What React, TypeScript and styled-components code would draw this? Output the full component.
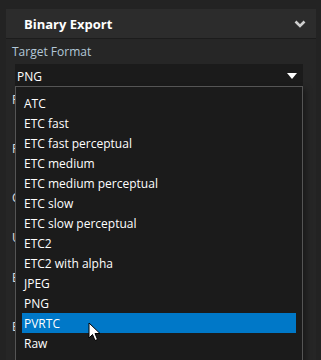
import styled, { createGlobalStyle } from "styled-components";

const GlobalStyle = createGlobalStyle`
  html, body {
    margin: 0;
    padding: 0;
    background: #232323;
    font-family: "Segoe UI", "Open Sans", "Noto Sans", sans-serif;
    -webkit-font-smoothing: antialiased;
  }
`

const Screen = styled.div`
  position: relative;
  width: 321px;
  height: 360px;
  overflow: hidden;
  background: #232323;
`

const Section = styled.div`
  margin: 9px 5px 0 6px;
  height: 351px;
  background: #262626;
`

const Header = styled.div`
  height: 30px;
  display: flex;
  align-items: center;
  justify-content: space-between;
  padding: 0 10px 0 18px;
  background: #2c2c2c;
  border-bottom: 1px solid #1c1c1c;
  box-sizing: border-box;
  color: #ffffff;
  font-size: 13px;
  font-weight: 700;
`

const Body = styled.div`
  position: relative;
  padding: 3px 0 0 6px;
`

const Label = styled.div<{ $gap?: number }>`
  height: 20px;
  line-height: 20px;
  font-size: 12px;
  color: #b3c8d8;
  margin-top: ${p => p.$gap ?? 0}px;
`

// labels covered by the open popup: only their first stroke shows
const CoveredLabel = styled(Label)`
  width: 9px;
  overflow: hidden;
  white-space: nowrap;
  color: #e6e6e6;
`

const Select = styled.div`
  margin: 2px 0 0 3px;
  width: 288px;
  height: 24px;
  display: flex;
  align-items: center;
  justify-content: space-between;
  padding: 0 6px 0 2px;
  box-sizing: border-box;
  background: #1b1b1b;
  color: #ffffff;
  font-size: 12px;
`

const Popup = styled.div`
  position: absolute;
  left: 15px;
  top: 86px;
  width: 288px;
  height: 280px;
  box-sizing: border-box;
  background: #1b1b1b;
  border: 1px solid #555555;
  padding: 6px 6px 0 6px;
  box-shadow: 3px 3px 6px rgba(0, 0, 0, 0.35);
`

const Option = styled.div<{ $active?: boolean }>`
  height: 20px;
  line-height: 22px;
  overflow: hidden;
  padding-left: 2px;
  font-size: 12px;
  color: #ffffff;
  background: ${p => (p.$active ? "#0078c8" : "transparent")};
`

const Cursor = styled.svg`
  position: absolute;
  left: 88px;
  top: 322px;
`

const options = [
  "ATC",
  "ETC fast",
  "ETC fast perceptual",
  "ETC medium",
  "ETC medium perceptual",
  "ETC slow",
  "ETC slow perceptual",
  "ETC2",
  "ETC2 with alpha",
  "JPEG",
  "PNG",
  "PVRTC",
  "Raw",
]

const hiddenLabels = [
  { text: "P", gap: 2 },
  { text: "P", gap: 29 },
  { text: "C", gap: 29 },
  { text: "U", gap: 20 },
  { text: "E", gap: 20 },
  { text: "E", gap: 29 },
]

export default function App() {
  return (
    <Screen>
      <GlobalStyle />
      <Section>
        <Header>
          <span>Binary Export</span>
          <svg width="12" height="8" viewBox="0 0 12 8">
            <path d="M1.5 1.5 L6 6 L10.5 1.5" fill="none" stroke="#cfcfcf" strokeWidth="2.6" />
          </svg>
        </Header>
        <Body>
          <Label>Target Format</Label>
          <Select>
            <span>PNG</span>
            <svg width="10" height="6" viewBox="0 0 10 6">
              <path d="M0 0 H10 L5 6 Z" fill="#ffffff" />
            </svg>
          </Select>
          {hiddenLabels.map((l, i) => (
            <CoveredLabel key={i} $gap={l.gap}>{l.text}</CoveredLabel>
          ))}
        </Body>
      </Section>
      <Popup>
        {options.map(o => (
          <Option key={o} $active={o === "PVRTC"}>{o}</Option>
        ))}
      </Popup>
      <Cursor width="13" height="20" viewBox="0 0 13 20">
        <path d="M1 1 V16 L4.5 12.5 L7 18.5 L9.5 17.5 L7 11.5 H12 Z" fill="#ffffff" stroke="#000000" strokeWidth="1" />
      </Cursor>
    </Screen>
  )
}
